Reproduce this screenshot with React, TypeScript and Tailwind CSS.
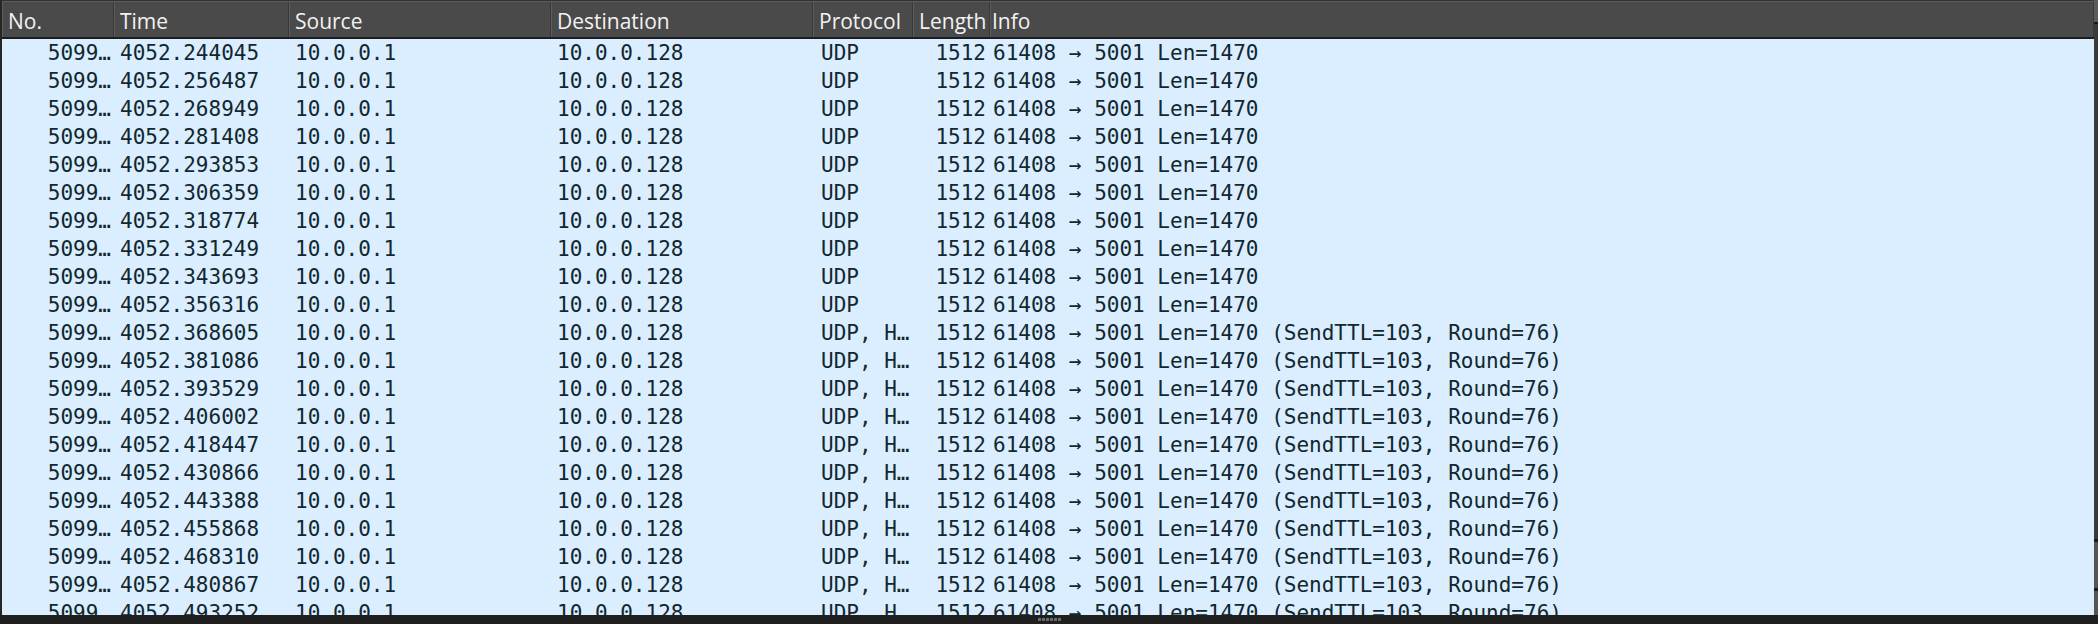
import React from 'react';

const times = [
  '4052.244045',
  '4052.256487',
  '4052.268949',
  '4052.281408',
  '4052.293853',
  '4052.306359',
  '4052.318774',
  '4052.331249',
  '4052.343693',
  '4052.356316',
  '4052.368605',
  '4052.381086',
  '4052.393529',
  '4052.406002',
  '4052.418447',
  '4052.430866',
  '4052.443388',
  '4052.455868',
  '4052.468310',
  '4052.480867',
  '4052.493252',
];

const packets = times.map((time, i) => {
  const hop = i >= 10;
  return {
    no: '5099…',
    time,
    source: '10.0.0.1',
    destination: '10.0.0.128',
    protocol: hop ? 'UDP, H…' : 'UDP',
    length: '1512',
    info: hop
      ? '61408 → 5001 Len=1470 (SendTTL=103, Round=76)'
      : '61408 → 5001 Len=1470',
  };
});

const headerFont = { fontFamily: '"Open Sans", "Noto Sans", sans-serif' };
const monoFont = { fontFamily: '"DejaVu Sans Mono", "Liberation Mono", monospace' };

function HeaderCell({ label, className }: { label: string; className: string }) {
  return (
    <div
      className={`flex h-full shrink-0 items-center border-l border-r border-l-[#5c5c5c] border-r-[#383838] pt-[3px] text-[21px] text-[#f2f2f2] ${className}`}
    >
      {label}
    </div>
  );
}

export default function App() {
  return (
    <div className="flex h-[624px] w-[2098px] flex-col overflow-hidden bg-[#1f1f1f]">
      <div className="flex min-h-0 flex-1">
        <div className="flex min-w-0 flex-1 flex-col border-l-2 border-[#262626]">
          {/* Column header */}
          <div className="flex h-[39px] shrink-0 flex-col" style={headerFont}>
            <div className="h-px bg-[#333333]" />
            <div className="h-px bg-[#5a5a5a]" />
            <div className="flex flex-1 bg-[#4a4a4a] leading-none">
              <HeaderCell label="No." className="w-[112px] border-l-[#4a4a4a] pl-[5px]" />
              <HeaderCell label="Time" className="w-[175px] pl-[5px]" />
              <HeaderCell label="Source" className="w-[262px] pl-[5px]" />
              <HeaderCell label="Destination" className="w-[262px] pl-[5px]" />
              <HeaderCell label="Protocol" className="w-[100px] pl-[5px]" />
              <HeaderCell label="Length" className="w-[77px] pl-[5px]" />
              <HeaderCell label="Info" className="flex-1 border-r-[#4a4a4a] pl-[1px]" />
            </div>
            <div className="h-[2px] bg-[#1c1c1c]" />
          </div>

          {/* Packet rows */}
          <div
            className="min-h-0 flex-1 overflow-hidden bg-[#daeeff] text-[21px] text-[#12272e]"
            style={monoFont}
          >
            {packets.map((p, i) => (
              <div key={i} className="flex h-[28px] items-center whitespace-nowrap leading-none">
                <div className="w-[112px] shrink-0 pr-[3px] text-right">{p.no}</div>
                <div className="w-[175px] shrink-0 pl-[6px]">{p.time}</div>
                <div className="w-[262px] shrink-0 pl-[6px]">{p.source}</div>
                <div className="w-[262px] shrink-0 pl-[6px]">{p.destination}</div>
                <div className="w-[100px] shrink-0 pl-[8px]">{p.protocol}</div>
                <div className="w-[77px] shrink-0 pr-[4px] text-right">{p.length}</div>
                <div className="flex-1 pl-[3px]">{p.info}</div>
              </div>
            ))}
          </div>
        </div>

        {/* Vertical scrollbar sliver */}
        <div className="flex w-[4px] shrink-0 flex-col bg-[#2a2a2a]">
          <div className="h-[22px] bg-[#5a5a5a]" />
          <div className="h-[2px] bg-[#1a1a1a]" />
          <div className="flex-1 bg-[#3a3a3a]" />
          <div className="h-[3px] bg-[#1a1a1a]" />
          <div className="h-[46px] bg-[#555555]" />
          <div className="h-[3px] bg-[#1a1a1a]" />
          <div className="h-[24px] bg-[#555555]" />
        </div>
      </div>

      {/* Splitter handle */}
      <div className="flex h-[9px] shrink-0 items-center justify-center bg-[#1f1f1f]">
        <div className="flex gap-px">
          {[0, 1, 2, 3, 4, 5].map((d) => (
            <div key={d} className="h-[3px] w-[3px] bg-[#6a6a6a]" />
          ))}
        </div>
      </div>
    </div>
  );
}
